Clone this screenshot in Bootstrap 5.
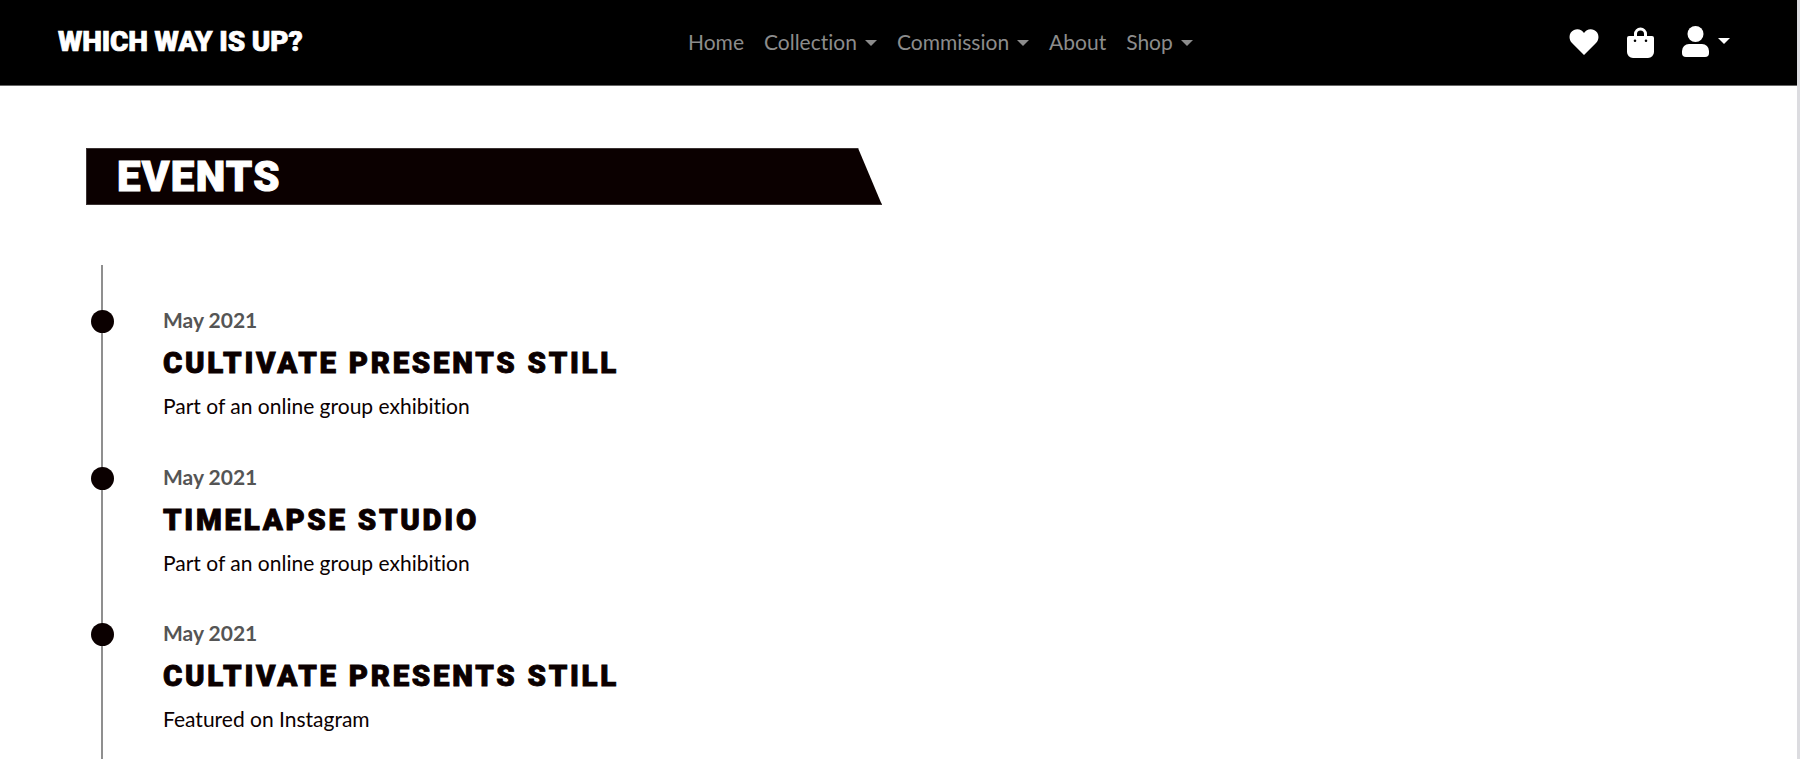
<!DOCTYPE html>
<html lang="en">
<head>
<meta charset="utf-8">
<title>Events</title>
<link href="https://cdn.jsdelivr.net/npm/bootstrap@5.3.0/dist/css/bootstrap.min.css" rel="stylesheet">
<style>
html,body{height:759px;overflow:hidden;}
body{font-family:"Lato","Noto Sans",sans-serif;font-variant-ligatures:none;background:#fff;color:#0b0000;border-right:3px solid #dcdce0;}
.top-bar{height:86px;background:#000;padding:0 58px;border-bottom:1px solid #666;}
.brand-name,.title-band h1,.entry-title{font-family:"Roboto","Liberation Sans",sans-serif;font-weight:900;text-transform:uppercase;}
.brand-name{font-size:28px;line-height:1;color:#fff;letter-spacing:-.15px;-webkit-text-stroke:.7px #fff;padding:0;margin:-2px 0 0;}
.top-bar .nav-link{color:#8c8c8c;font-size:21px;padding:0 10px;}
.top-bar .main-links{position:absolute;left:678px;top:0;height:84px;}
.top-bar .dropdown-toggle::after{margin-left:8px;border-top-width:6px;border-left-width:6.500px;border-right-width:6.500px;vertical-align:4px;}
.tool-icons{gap:28px;margin-right:9px;margin-top:-2px;}
.tool-icons .user-menu{color:#fff;display:flex;align-items:center;gap:9px;}
.tool-icons .caret{width:0;height:0;border-top:6px solid #fff;border-left:6px solid transparent;border-right:6px solid transparent;margin-top:-1px;}
.page-body{padding:62px 0 0 86px;}
.title-band{width:796px;height:57px;background:#0b0000;border:1px solid #3a3232;clip-path:polygon(0 0,772px 0,100% 100%,0 100%);display:flex;align-items:center;padding-left:30px;}
.title-band h1{font-size:42px;line-height:1;color:#fff;letter-spacing:1.300px;-webkit-text-stroke:1px #fff;margin:0;}
.time-line{margin:60px 0 0 15px;border-left:2px solid #8f8f8f;padding:0 0 0 60px;height:500px;}
.time-entry{position:relative;height:156.500px;padding-top:42px;}
.time-entry::before{content:"";position:absolute;left:-72px;top:45px;width:23px;height:23px;border-radius:50%;background:#0b0000;}
.entry-date{font-size:21px;font-weight:700;color:#555;line-height:25px;margin:0;}
.entry-title{font-size:29.500px;line-height:32px;margin:15px 0 14px;letter-spacing:2.700px;color:#0b0000;-webkit-text-stroke:.9px #0b0000;}
.entry-text{font-size:21px;line-height:26px;margin:0;color:#0b0000;}
</style>
</head>
<body>
<nav class="top-bar d-flex align-items-center justify-content-between position-relative">
  <a class="brand-name text-decoration-none" href="#">Which Way Is Up?</a>
  <ul class="nav main-links align-items-center">
    <li class="nav-item"><a class="nav-link" href="#">Home</a></li>
    <li class="nav-item"><a class="nav-link dropdown-toggle" href="#">Collection</a></li>
    <li class="nav-item"><a class="nav-link dropdown-toggle" href="#">Commission</a></li>
    <li class="nav-item"><a class="nav-link" href="#">About</a></li>
    <li class="nav-item"><a class="nav-link dropdown-toggle" href="#">Shop</a></li>
  </ul>
  <div class="tool-icons d-flex align-items-center">
    <svg width="30" height="28" viewBox="0 0 30 28" aria-hidden="true"><path fill="#fff" d="M15 27 3 15C-1 11 0 4 5 2c4-2 8 0 10 3 2-3 6-5 10-3 5 2 6 9 2 13z"/></svg>
    <svg width="27" height="32" viewBox="0 0 27 32" aria-hidden="true"><path fill="#fff" fill-rule="evenodd" d="M7 10V8a6.500 6.500 0 0 1 13 0v2h5a2 2 0 0 1 2 2v14a6 6 0 0 1-6 6H6a6 6 0 0 1-6-6V12a2 2 0 0 1 2-2zm3 0h7V8a3.500 3.500 0 0 0-7 0zM8 13.500a1.300 1.300 0 1 0 0 2.600 1.300 1.300 0 0 0 0-2.600zm11 0a1.300 1.300 0 1 0 0 2.600 1.300 1.300 0 0 0 0-2.600z"/></svg>
    <div class="user-menu">
      <svg width="27" height="31" viewBox="0 0 27 31" aria-hidden="true"><circle fill="#fff" cx="13.500" cy="8" r="8"/><path fill="#fff" d="M7 18h13a7 7 0 0 1 7 7v2a4 4 0 0 1-4 4H4a4 4 0 0 1-4-4v-2a7 7 0 0 1 7-7z"/></svg>
      <span class="caret"></span>
    </div>
  </div>
</nav>
<main class="page-body">
  <div class="title-band"><h1>Events</h1></div>
  <div class="time-line">
    <div class="time-entry">
      <p class="entry-date">May 2021</p>
      <h2 class="entry-title">Cultivate Presents Still</h2>
      <p class="entry-text">Part of an online group exhibition</p>
    </div>
    <div class="time-entry">
      <p class="entry-date">May 2021</p>
      <h2 class="entry-title">Timelapse Studio</h2>
      <p class="entry-text">Part of an online group exhibition</p>
    </div>
    <div class="time-entry">
      <p class="entry-date">May 2021</p>
      <h2 class="entry-title">Cultivate Presents Still</h2>
      <p class="entry-text">Featured on Instagram</p>
    </div>
  </div>
</main>
<script src="https://cdn.jsdelivr.net/npm/bootstrap@5.3.0/dist/js/bootstrap.bundle.min.js"></script>
</body>
</html>
